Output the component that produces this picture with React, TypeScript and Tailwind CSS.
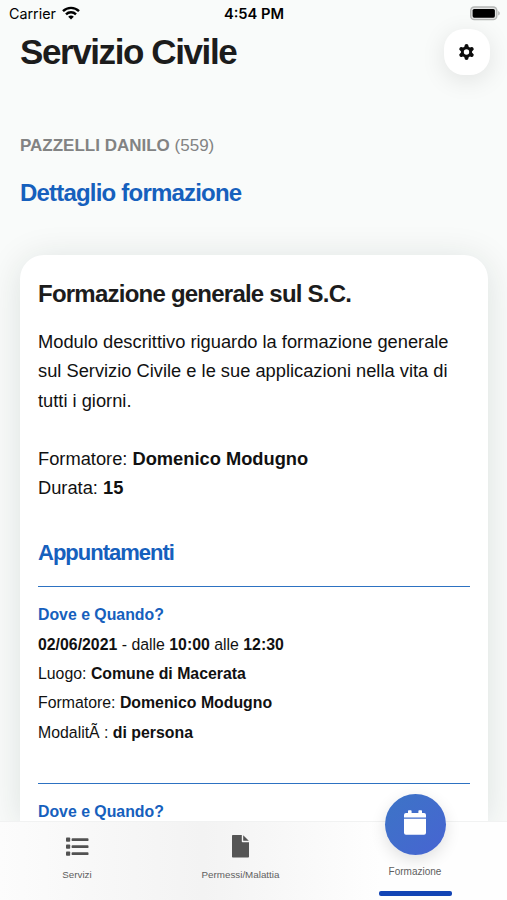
import React from "react";

const appointments = [
  {
    title: "Dove e Quando?",
    details: {
      date: "02/06/2021",
      from: "10:00",
      to: "12:30",
      place: "Comune di Macerata",
      trainer: "Domenico Modugno",
      mode: "di persona",
    },
  },
  { title: "Dove e Quando?" },
];

function WifiIcon() {
  return (
    <svg width="18" height="14" viewBox="0 0 18 14" fill="none" stroke="#000" strokeWidth="2.4">
      <path d="M1 5.2C5.5.7 12.5.7 17 5.2" />
      <path d="M4 8.4c2.8-2.8 7.2-2.8 10 0" />
      <path d="M9 13.5 6.2 10.7c1.6-1.5 4-1.5 5.6 0z" fill="#000" stroke="none" />
    </svg>
  );
}

function BatteryIcon() {
  return (
    <svg width="31" height="15" viewBox="0 0 31 15">
      <rect x="0" y="0.3" width="27.5" height="14" rx="4.3" fill="#b4b6b5" />
      <rect x="1.4" y="1.7" width="24.7" height="11.2" rx="3" fill="#e3e4e4" />
      <rect x="2.6" y="2.9" width="22.3" height="8.8" rx="1.6" fill="#000" />
      <path d="M28.3 5v4.6c1.9-.8 1.9-3.8 0-4.6z" fill="#a9abab" />
    </svg>
  );
}

function GearIcon() {
  return (
    <svg width="17" height="18" viewBox="0 0 17 18" className="mr-[1px]" stroke="#0c0c0c" strokeLinecap="round">
      <path strokeWidth="4" d="M8.5 3v12M3.3 6l10.4 6M13.7 6 3.3 12" />
      <circle cx="8.500" cy="9" r="4.200" fill="#fff" strokeWidth="3" />
    </svg>
  );
}

function ListIcon() {
  return (
    <svg width="23" height="20" viewBox="0 0 23 20" fill="#525252">
      <rect x="0" y="0.5" width="4.2" height="4.2" rx="0.8" />
      <rect x="0" y="7.5" width="4.2" height="4.2" rx="0.8" />
      <rect x="0" y="14.5" width="4.2" height="4.2" rx="0.8" />
      <rect x="5.6" y="1.2" width="16.9" height="2.9" rx="0.9" />
      <rect x="5.6" y="8.2" width="16.9" height="2.9" rx="0.9" />
      <rect x="5.6" y="15.2" width="16.9" height="2.9" rx="0.9" />
    </svg>
  );
}

function FileIcon() {
  return (
    <svg width="17" height="23" viewBox="0 0 17 23" fill="#555">
      <path d="M.8 0H9.8V6.4q0 .8.8.8H17V21.7q0 .8-.8.8H.8q-.8 0-.8-.8V.8Q0 0 .8 0z" />
      <path d="M11.2 0.2 16.8 5.8H11.2z" />
    </svg>
  );
}

function CalendarIcon() {
  return (
    <svg width="22" height="25" viewBox="0 0 22 25" fill="#fff">
      <path d="M2 3h2V1q0-.8.8-.8h2q.8 0 .8.8v2h6.8V1q0-.8.8-.8h2q.8 0 .8.8v2H20q2 0 2 2v2.400H0V5q0-2 2-2z" />
      <path d="M0 8.800h22v13.900q0 2-2 2H2q-2 0-2-2z" />
    </svg>
  );
}

function StatusBar() {
  return (
    <div className="grid grid-cols-3 items-center h-[27px] shrink-0 pl-[9px] pr-[6px] font-['Inter'] text-black">
      <div className="flex items-center gap-[6px] text-[14.3px] leading-none">
        <span className="mt-[1px]">Carrier</span>
        <WifiIcon />
      </div>
      <p className="text-center text-[14.7px] leading-none font-semibold mt-[2px] ml-[-2px]">4:54 PM</p>
      <div className="flex justify-end">
        <BatteryIcon />
      </div>
    </div>
  );
}

function TabBar() {
  return (
    <nav className="relative h-[79px] shrink-0 flex justify-between pl-[29px] pr-[44px] bg-gradient-to-r from-[#fcfcfc] via-[#f3f3f3] via-40% to-[#fefefe] to-75% border-t border-[#f1f2f2] text-[9.8px] leading-[12px] text-[#5f5f5f]">
      <a className="flex flex-col items-center w-[96px]">
        <div className="h-[22px] mt-[14px] flex items-center">
          <ListIcon />
        </div>
        <span className="mt-[11px]">Servizi</span>
      </a>
      <a className="flex flex-col items-center w-[96px] ml-[-11px]">
        <div className="h-[22px] mt-[13px] flex items-center">
          <FileIcon />
        </div>
        <span className="mt-[12px]">Permessi/Malattia</span>
      </a>
      <a className="flex flex-col items-center w-[96px]">
        <div className="size-[61px] shrink-0 mt-[-28px] rounded-full flex items-center justify-center text-white bg-gradient-to-br from-[#3c74c6] to-[#4764d2] shadow-[0_5px_16px_rgba(0,0,0,0.12)]">
          <div className="mt-[-4px]">
            <CalendarIcon />
          </div>
        </div>
        <span className="mt-[11px] text-[10px]">Formazione</span>
        <div className="mt-[13px] h-[5px] w-[73px] shrink-0 rounded-[2px] bg-[#1345b5]" />
      </a>
    </nav>
  );
}

export default function App() {
  return (
    <div className="flex flex-col w-[507px] h-[900px] overflow-hidden bg-[#f9fbfa] font-['Liberation_Sans',Arial,sans-serif] text-[#111]">
      <StatusBar />
      <header className="flex shrink-0 justify-between items-start pl-[20px] pr-[17px]">
        <h1 className="mt-[5px] text-[35px] leading-[40px] font-bold tracking-[-1.4px] text-[#1c1c1c]">Servizio Civile</h1>
        <button className="size-[46px] mt-[2px] rounded-[20px] bg-white flex items-center justify-center shadow-[0_5px_25px_rgba(0,0,0,0.1)]">
          <GearIcon />
        </button>
      </header>

      <div className="shrink-0 px-[20px] mt-[61px]">
        <p className="text-[17px] leading-[20px] text-[#828383]">
          <b>PAZZELLI DANILO</b> (559)
        </p>
        <h2 className="mt-[23px] text-[24px] leading-[28px] font-bold tracking-[-0.8px] text-[#1660bd]">Dettaglio formazione</h2>
      </div>

      <main className="flex-1 min-h-0 ml-[20px] mr-[19px] mt-[48px] pt-[25px] px-[18px] rounded-t-[24px] bg-white shadow-[0_4px_36px_rgba(20,40,30,0.12)]">
        <h3 className="text-[24px] leading-[28px] font-bold tracking-[-0.77px] text-[#1c1c1c]">Formazione generale sul S.C.</h3>
        <div className="mt-[19px] text-[18.3px] leading-[29.3px]">
          <p>
            Modulo descrittivo riguardo la formazione generale
            <br />
            sul Servizio Civile e le sue applicazioni nella vita di
            <br />
            tutti i giorni.
          </p>
          <p className="mt-[29.3px]">
            Formatore: <b>Domenico Modugno</b>
          </p>
          <p>
            Durata: <b>15</b>
          </p>
        </div>

        <h4 className="mt-[36px] text-[22px] leading-[28px] font-bold tracking-[-1px] text-[#1660bd]">Appuntamenti</h4>
        <div className="mt-[19px] text-[15.85px] leading-[29.3px]">
          {appointments.map(({ title, details }, index) => (
            <div key={index} className="border-t border-[#2d72c2] pt-[13px]">
              <p className="font-bold text-[#1660bd]">{title}</p>
              {details && (
                <div className="pt-[0.6px] pb-[36.4px]">
                  <p>
                    <b>{details.date}</b> - dalle <b>{details.from}</b> alle <b>{details.to}</b>
                  </p>
                  <p>
                    Luogo: <b>{details.place}</b>
                  </p>
                  <p>
                    Formatore: <b>{details.trainer}</b>
                  </p>
                  <p>
                    ModalitÃ&nbsp;: <b>{details.mode}</b>
                  </p>
                </div>
              )}
            </div>
          ))}
        </div>
      </main>

      <TabBar />
    </div>
  );
}
